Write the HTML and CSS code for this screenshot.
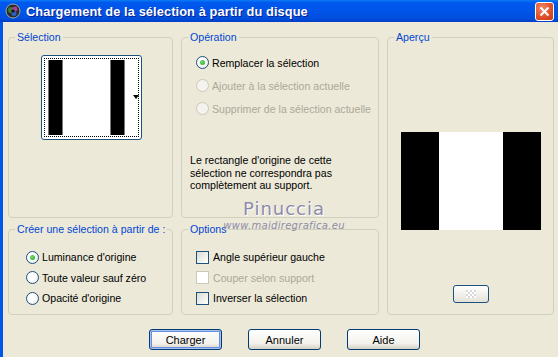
FILE: index.html
```html
<!DOCTYPE html>
<html lang="fr">
<head>
<meta charset="UTF-8">
<title>Chargement de la sélection à partir du disque</title>
<link rel="stylesheet" href="styles.css">
</head>
<body>
<div class="window">
  <div class="titlebar">
    <svg class="app-icon" width="16" height="16" viewBox="0 0 16 16">
      <circle cx="8" cy="8" r="7" fill="#2b2b2b" stroke="#9aa" stroke-width="1"/>
      <circle cx="6" cy="7" r="3" fill="#3a7d3a"/>
      <circle cx="10" cy="6" r="2.5" fill="#b03a9a"/>
      <circle cx="9" cy="10.5" r="2.5" fill="#2f5fc0"/>
      <circle cx="8" cy="8" r="1.6" fill="#111"/>
    </svg>
    <span class="title">Chargement de la sélection à partir du disque</span>
    <span class="close">
      <svg width="11" height="11" viewBox="0 0 11 11"><path d="M1.5 1.5 L9.5 9.5 M9.5 1.5 L1.5 9.5" stroke="#fff" stroke-width="2"/></svg>
    </span>
  </div>

  <div class="content">
    <div class="groups">
      <fieldset class="group g-selection">
        <legend>Sélection</legend>
        <div class="thumb">
          <div class="thumb-inner">
            <span class="bar black"></span>
            <span class="bar white wide"></span>
            <span class="bar black"></span>
            <span class="bar white"></span>
          </div>
          <span class="arrow"></span>
        </div>
      </fieldset>

      <fieldset class="group g-operation">
        <legend>Opération</legend>
        <div class="choice"><span class="radio on"></span>Remplacer la sélection</div>
        <div class="choice disabled"><span class="radio"></span>Ajouter à la sélection actuelle</div>
        <div class="choice disabled"><span class="radio"></span>Supprimer de la sélection actuelle</div>
        <p class="note">Le rectangle d'origine de cette sélection ne correspondra pas complètement au support.</p>
      </fieldset>

      <fieldset class="group g-apercu">
        <legend>Aperçu</legend>
        <div class="preview">
          <span class="pv black"></span>
          <span class="pv white"></span>
          <span class="pv black"></span>
        </div>
        <span class="zoom-btn"><span class="checker"></span></span>
      </fieldset>

      <fieldset class="group g-creer">
        <legend>Créer une sélection à partir de :</legend>
        <div class="choice"><span class="radio on"></span>Luminance d'origine</div>
        <div class="choice"><span class="radio"></span>Toute valeur sauf zéro</div>
        <div class="choice"><span class="radio"></span>Opacité d'origine</div>
      </fieldset>

      <fieldset class="group g-options">
        <legend>Options</legend>
        <div class="choice"><span class="check"></span>Angle supérieur gauche</div>
        <div class="choice disabled"><span class="check"></span>Couper selon support</div>
        <div class="choice"><span class="check"></span>Inverser la sélection</div>
      </fieldset>
    </div>

    <div class="buttons">
      <button class="default">Charger</button>
      <button>Annuler</button>
      <button>Aide</button>
    </div>

    <div class="watermark">
      <span class="wm-name">Pinuccia</span>
      <span class="wm-url">www.maidiregrafica.eu</span>
    </div>
  </div>
</div>
</body>
</html>
```

FILE: styles.css
```css
body {
  margin: 0;
  background-color: #ece9d8;
  font-family: "Liberation Sans", Arial, sans-serif;
  font-size: 10.6px;
  color: #000;
}
.window {
  width: 558px;
  height: 357px;
  display: flex;
  flex-direction: column;
  overflow: hidden;
}
.titlebar {
  height: 22px;
  flex: none;
  display: flex;
  align-items: center;
  padding: 0 4px 0 5px;
  background: linear-gradient(#0a7cf5 0%, #0058ee 12%, #0054e9 50%, #0050e0 80%, #003fc9 100%);
}
.app-icon {
  flex: none;
}
.title {
  margin-left: 5px;
  color: #fff;
  font-weight: bold;
  font-size: 12.8px;
  letter-spacing: 0.1px;
  text-shadow: 1px 1px 0 #0a1e8c;
  flex: 1;
}
.close {
  width: 17px;
  height: 17px;
  border: 1px solid #fff;
  border-radius: 3px;
  background: radial-gradient(circle at 35% 30%, #f08a6a, #e0502a 55%, #c63a16);
  display: flex;
  align-items: center;
  justify-content: center;
  margin-top: 1px;
}
.content {
  flex: 1;
  position: relative;
  border-left: 3px solid #0055ea;
  padding: 9px 4px 0 5px;
}
.groups {
  display: grid;
  grid-template-columns: 165px 198px 167px;
  grid-template-rows: 187px 92px;
  column-gap: 8px;
  row-gap: 5px;
}
.group {
  margin: 0;
  padding: 0;
  border: 1px solid #d0d0bf;
  border-radius: 4px;
  min-width: 0;
}
.group legend {
  color: #0046d5;
  padding: 0 2px;
  margin-left: 6px;
  line-height: 13px;
  white-space: nowrap;
}
.g-apercu {
  grid-column: 3;
  grid-row: 1 / span 2;
  display: flex;
  flex-direction: column;
  align-items: center;
}
.g-creer {
  grid-column: 1;
  grid-row: 2;
}
.g-options {
  grid-column: 2;
  grid-row: 2;
}

/* thumbnail of the selection */
.thumb {
  width: 101px;
  height: 85px;
  margin: 11px 0 0 32px;
  border: 1px solid #1c5180;
  border-radius: 3px;
  background: #fff;
  position: relative;
  padding: 2px;
  box-sizing: border-box;
}
.thumb-inner {
  height: 100%;
  display: flex;
  border: 1px dotted #000;
  box-sizing: border-box;
  padding: 1px 6px 1px 3px;
}
.thumb .bar {
  display: block;
  height: 100%;
}
.thumb .black {
  width: 14px;
  background: #000;
  border-left: 1px solid #777;
  border-right: 1px solid #777;
}
.thumb .white {
  width: 8px;
  background: #fff;
}
.thumb .white.wide {
  width: 50px;
}
.thumb .arrow {
  position: absolute;
  right: 2px;
  top: 39px;
  border-left: 3px solid transparent;
  border-right: 3px solid transparent;
  border-top: 4px solid #000;
}

/* radios and checkboxes */
.choice {
  display: flex;
  align-items: center;
  height: 21px;
  white-space: nowrap;
}
.g-operation .choice {
  height: 23px;
  padding-left: 14px;
}
.g-operation .choice:first-of-type {
  margin-top: 7px;
}
.g-creer .choice,
.g-options .choice {
  padding-left: 17px;
  height: 20.5px;
}
.g-options .choice {
  padding-left: 14px;
}
.g-creer .choice:first-of-type,
.g-options .choice:first-of-type {
  margin-top: 11px;
}
.choice.disabled {
  color: #aca899;
}
.radio {
  width: 11px;
  height: 11px;
  border: 1px solid #1c5180;
  border-radius: 50%;
  background: radial-gradient(circle at 40% 40%, #fff 40%, #dcdcd4);
  margin-right: 3px;
  position: relative;
  flex: none;
}
.radio.on::after {
  content: "";
  position: absolute;
  left: 3px;
  top: 3px;
  width: 5px;
  height: 5px;
  border-radius: 50%;
  background: radial-gradient(circle at 40% 40%, #6fe06f, #21a121);
}
.disabled .radio {
  border-color: #cac8bb;
  background: #f4f3ee;
}
.check {
  width: 11px;
  height: 11px;
  border: 1px solid #1c5180;
  background: linear-gradient(135deg, #dcdcd4, #fff);
  margin-right: 4px;
  flex: none;
}
.disabled .check {
  border-color: #cac8bb;
  background: #fff;
}
.note {
  margin: 34px 0 0 8px;
  width: 175px;
  line-height: 12.5px;
}

/* preview */
.preview {
  display: flex;
  margin-top: 88px;
  height: 98px;
}
.pv {
  display: block;
  width: 38px;
  height: 100%;
}
.pv.black {
  background: #000;
}
.pv.white {
  width: 64px;
  background: #fff;
}
.zoom-btn {
  margin-top: 55px;
  width: 34px;
  height: 16px;
  border: 1px solid #1c5180;
  border-radius: 3px;
  background: linear-gradient(#fff, #e4e2d6);
  display: flex;
  align-items: center;
  justify-content: center;
}
.checker {
  width: 10px;
  height: 8px;
  background: repeating-conic-gradient(#fff 0 25%, #d8d8d8 0 50%) 0 0 / 4px 4px;
}

/* bottom buttons */
.buttons {
  display: flex;
  gap: 26px;
  margin: 14px 0 0 141px;
}
button {
  width: 73px;
  height: 21px;
  font-family: "Liberation Sans", Arial, sans-serif;
  font-size: 11px;
  color: #000;
  border: 1px solid #003c74;
  border-radius: 3px;
  background: linear-gradient(#ffffff, #f3f2ec 70%, #d6d0c5);
  padding: 0;
}
button.default {
  box-shadow: inset 0 0 0 1px #a6c3ef, inset 0 0 0 2px #6a8fe0;
}

/* watermark over the dialog */
.watermark {
  position: absolute;
  left: 216px;
  top: 177px;
  width: 130px;
  display: flex;
  flex-direction: column;
  align-items: center;
  pointer-events: none;
}
.wm-name {
  font-family: "DejaVu Sans", sans-serif;
  font-size: 18px;
  line-height: 20px;
  letter-spacing: 1px;
  color: #8d8bab;
  text-shadow: 1px 1px 0 #fff;
}
.wm-url {
  font-family: "DejaVu Sans", sans-serif;
  font-style: italic;
  font-size: 10px;
  line-height: 12px;
  color: #8e8ca8;
  margin-top: 1px;
  letter-spacing: 0.3px;
}
```
